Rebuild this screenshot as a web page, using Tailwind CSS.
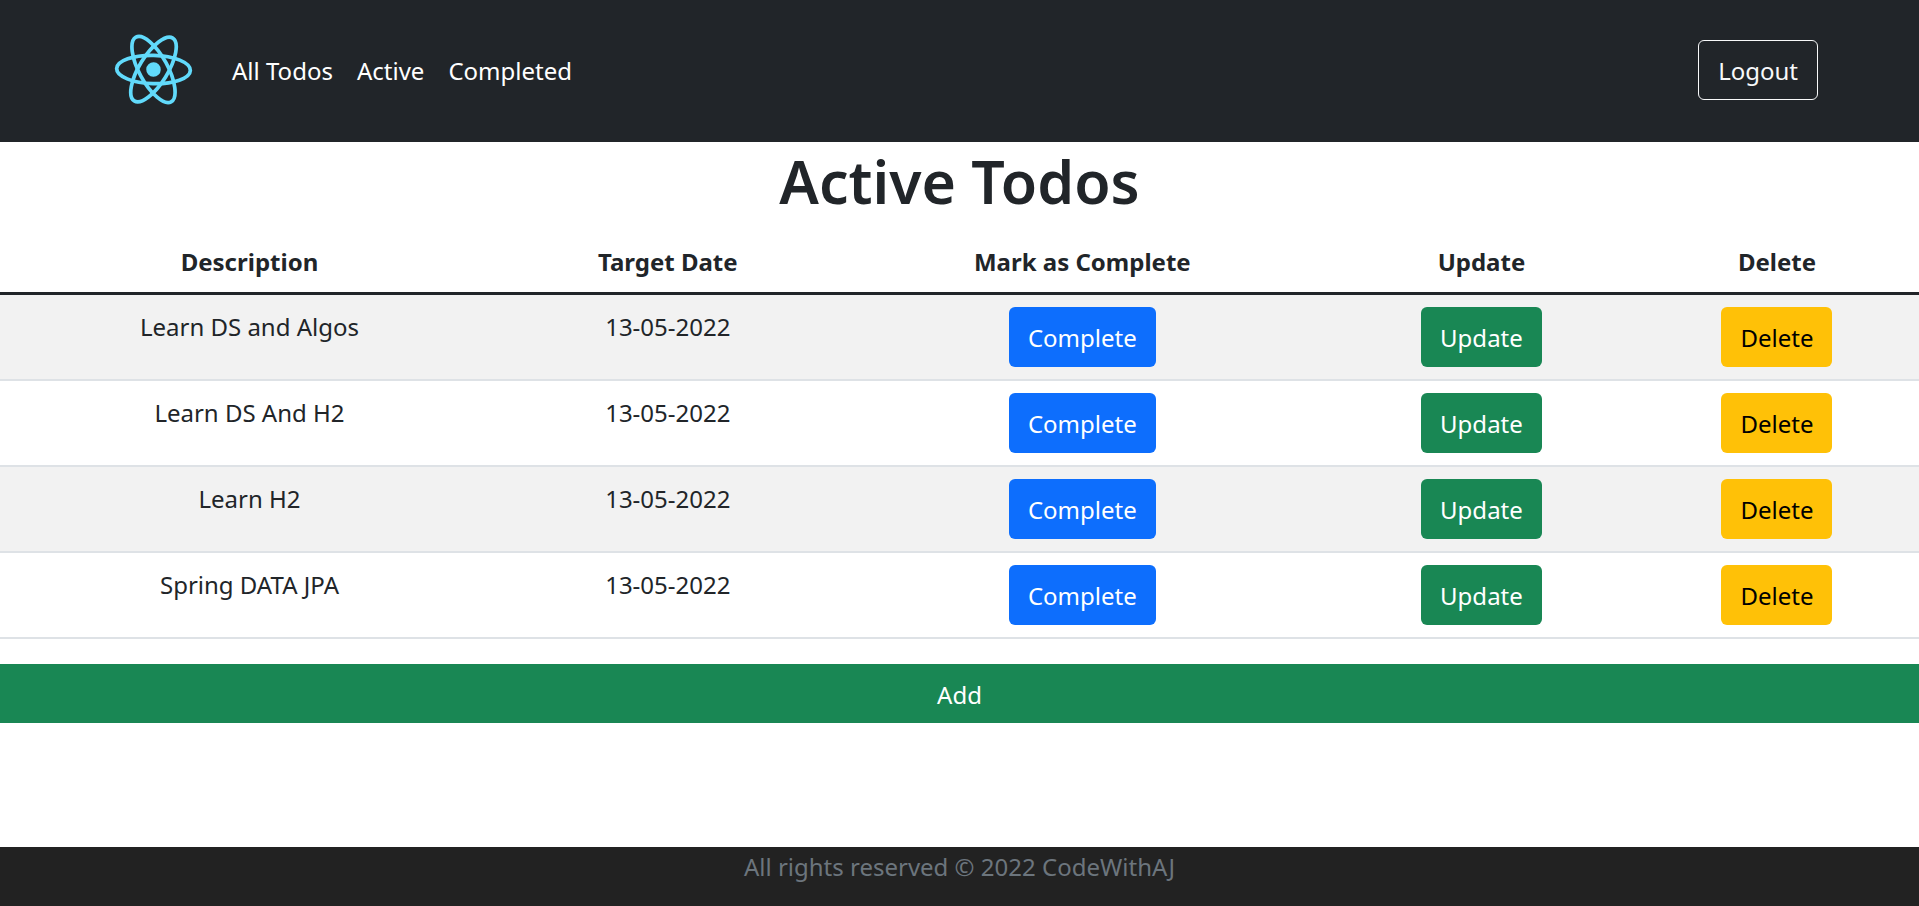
<!DOCTYPE html>
<html lang="en">
<head>
<meta charset="utf-8">
<meta name="viewport" content="width=device-width, initial-scale=1">
<title>Active Todos</title>
<script src="https://cdn.jsdelivr.net/npm/@tailwindcss/browser@4"></script>
</head>
<body class="flex min-h-screen flex-col bg-white font-['Noto_Sans',sans-serif] text-[24px] leading-[38px] text-[#212529]">
  <header class="flex items-center justify-between bg-[#212529] pt-[34px] pr-[101px] pb-[37px] pl-[114px] text-white">
    <nav class="flex items-center" aria-label="Main">
      <a href="#" class="mr-[27px]" aria-label="Home">
        <svg class="h-[71px] w-[79px]" viewBox="-11.65 -10.5 23.3 21" fill="none" stroke="#61dafb" stroke-width="1.1">
          <g transform="rotate(1.5)">
            <circle r="2.15" fill="#61dafb" stroke="none"/>
            <ellipse rx="10.9" ry="4.2"/>
            <ellipse rx="10.9" ry="4.2" transform="rotate(60)"/>
            <ellipse rx="10.9" ry="4.2" transform="rotate(120)"/>
          </g>
        </svg>
      </a>
      <a href="#" class="px-3 pt-0.5">All Todos</a>
      <a href="#" class="px-3 pt-0.5">Active</a>
      <a href="#" class="px-3 pt-0.5">Completed</a>
    </nav>
    <button type="button" class="rounded-md border border-[#f8f9fa] px-[19px] pt-[11px] pb-[9px] text-[#f8f9fa]">Logout</button>
  </header>

  <main>
    <h1 class="mb-[11px] pt-px text-center text-[59px] leading-[76px] font-semibold">Active Todos</h1>
    <table class="w-full table-fixed border-collapse text-center">
      <colgroup>
        <col class="w-[26%]"><col class="w-[17.6%]"><col class="w-[25.6%]"><col class="w-[16%]"><col class="w-[14.8%]">
      </colgroup>
      <thead>
        <tr class="border-b-3 border-[#212529]">
          <th scope="col" class="px-3 pt-[13px] pb-[11px]">Description</th>
          <th scope="col" class="px-3 pt-[13px] pb-[11px]">Target Date</th>
          <th scope="col" class="px-3 pt-[13px] pb-[11px]">Mark as Complete</th>
          <th scope="col" class="px-3 pt-[13px] pb-[11px]">Update</th>
          <th scope="col" class="px-3 pt-[13px] pb-[11px]">Delete</th>
        </tr>
      </thead>
      <tbody class="align-top">
        <tr class="border-b-2 border-[#dee2e6] bg-[#f2f2f2]">
          <td class="px-3 pt-[13px] pb-[11px]">Learn DS and Algos</td>
          <td class="px-3 pt-[13px] pb-[11px]">13-05-2022</td>
          <td class="p-3"><button type="button" class="mx-auto block rounded-md bg-[#0d6efd] px-[19px] pt-3 pb-[10px] text-white">Complete</button></td>
          <td class="p-3"><button type="button" class="mx-auto block rounded-md bg-[#198754] px-[19px] pt-3 pb-[10px] text-white">Update</button></td>
          <td class="p-3"><button type="button" class="mx-auto block rounded-md bg-[#ffc107] px-[19px] pt-3 pb-[10px] text-black">Delete</button></td>
        </tr>
        <tr class="border-b-2 border-[#dee2e6]">
          <td class="px-3 pt-[13px] pb-[11px]">Learn DS And H2</td>
          <td class="px-3 pt-[13px] pb-[11px]">13-05-2022</td>
          <td class="p-3"><button type="button" class="mx-auto block rounded-md bg-[#0d6efd] px-[19px] pt-3 pb-[10px] text-white">Complete</button></td>
          <td class="p-3"><button type="button" class="mx-auto block rounded-md bg-[#198754] px-[19px] pt-3 pb-[10px] text-white">Update</button></td>
          <td class="p-3"><button type="button" class="mx-auto block rounded-md bg-[#ffc107] px-[19px] pt-3 pb-[10px] text-black">Delete</button></td>
        </tr>
        <tr class="border-b-2 border-[#dee2e6] bg-[#f2f2f2]">
          <td class="px-3 pt-[13px] pb-[11px]">Learn H2</td>
          <td class="px-3 pt-[13px] pb-[11px]">13-05-2022</td>
          <td class="p-3"><button type="button" class="mx-auto block rounded-md bg-[#0d6efd] px-[19px] pt-3 pb-[10px] text-white">Complete</button></td>
          <td class="p-3"><button type="button" class="mx-auto block rounded-md bg-[#198754] px-[19px] pt-3 pb-[10px] text-white">Update</button></td>
          <td class="p-3"><button type="button" class="mx-auto block rounded-md bg-[#ffc107] px-[19px] pt-3 pb-[10px] text-black">Delete</button></td>
        </tr>
        <tr class="border-b-2 border-[#dee2e6]">
          <td class="px-3 pt-[13px] pb-[11px]">Spring DATA JPA</td>
          <td class="px-3 pt-[13px] pb-[11px]">13-05-2022</td>
          <td class="p-3"><button type="button" class="mx-auto block rounded-md bg-[#0d6efd] px-[19px] pt-3 pb-[10px] text-white">Complete</button></td>
          <td class="p-3"><button type="button" class="mx-auto block rounded-md bg-[#198754] px-[19px] pt-3 pb-[10px] text-white">Update</button></td>
          <td class="p-3"><button type="button" class="mx-auto block rounded-md bg-[#ffc107] px-[19px] pt-3 pb-[10px] text-black">Delete</button></td>
        </tr>
      </tbody>
    </table>
    <button type="button" class="mt-[25px] block w-full bg-[#198754] pt-3 pb-[9px] text-white">Add</button>
  </main>

  <footer class="mt-auto bg-[#222222] pt-px pb-5 text-center text-[#6c757d]">All rights reserved © 2022 CodeWithAJ</footer>
</body>
</html>
